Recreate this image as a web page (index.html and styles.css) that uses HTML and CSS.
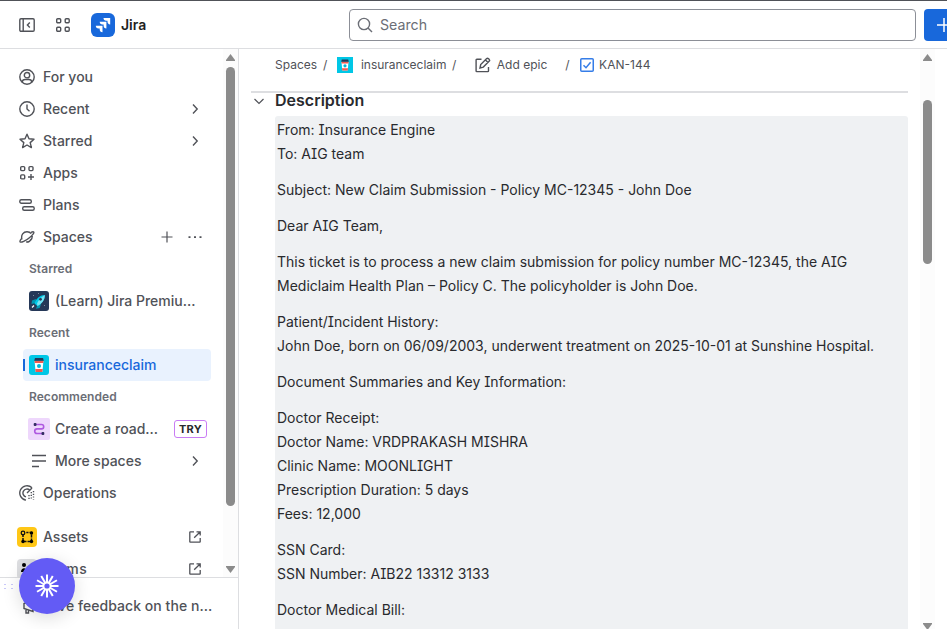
FILE: index.html
```html
<!DOCTYPE html>
<html lang="en">
<head>
<meta charset="utf-8">
<title>KAN-144 - Jira</title>
<link rel="stylesheet" href="styles.css">
</head>
<body>
<svg class="defs" width="0" height="0" aria-hidden="true">
  <symbol id="chev" viewBox="0 0 16 16"><path d="M6 3.5 10.2 8 6 12.5" fill="none" stroke="currentColor" stroke-width="1.4"/></symbol>
  <symbol id="ext" viewBox="0 0 16 16"><path d="M7 2.8H3.3q-.5 0-.5.5v9.4q0 .5.5.5h9.4q.5 0 .5-.5V9M9.5 2.8h3.7v3.7M13 3 7.2 8.8" fill="none" stroke="currentColor" stroke-width="1.3"/></symbol>
  <symbol id="cup" viewBox="0 0 20 20"><path d="M0 0h20v20H0z" fill="#00c7e6"/><path d="M5.6 6h8.8l-1 11H6.6z" fill="#fff"/><path d="M5.5 5.8h9l-.2 2.2H5.7zM6.2 14h7.6l-.4 3H6.6z" fill="#f15b50"/><path d="M6 3h8l.8 2.8H5.2z" fill="#253858"/><circle cx="10" cy="11" r="2" fill="#00b8d9"/></symbol>
</svg>
<div class="app">
  <header class="top">
    <svg class="i16 panel" viewBox="0 0 16 16"><rect x=".8" y="1.7" width="14.4" height="12.6" rx="1.2"/><path d="M4.2 2v12M10.8 5.5 8.4 8l2.4 2.5"/></svg>
    <svg class="i16 grid" viewBox="0 0 16 16"><rect x="1.7" y="1.7" width="4" height="4" rx="1"/><rect x="10.2" y="1.7" width="4" height="4" rx="1"/><rect x="1.7" y="10.2" width="4" height="4" rx="1"/><rect x="10.2" y="10.2" width="4" height="4" rx="1"/></svg>
    <svg class="logo" viewBox="0 0 24 24"><rect width="24" height="24" rx="6" fill="#1868db"/><path d="M12.5 5h6.700v6.600a3 3 0 0 1-2.700-3V7.800h-1.200A2.900 2.900 0 0 1 12.500 5zM8.700 8.800h6.700v6.700a3 3 0 0 1-2.800-3v-.9h-1.100a2.900 2.900 0 0 1-2.800-2.800zM4.800 12.800h6.700v6.500a3 3 0 0 1-2.800-3v-.7H7.600a2.900 2.900 0 0 1-2.800-2.800z" fill="#fff"/></svg>
    <span class="brand">Jira</span>
    <div class="search"><svg class="i16" viewBox="0 0 16 16"><circle cx="7" cy="7" r="5.600"/><path d="m11 11 4 4"/></svg><span>Search</span></div>
    <div class="create"><svg viewBox="0 0 16 16"><path d="M8 1v14M1 8h14"/></svg></div>
  </header>
  <div class="body">
    <aside class="side">
      <div class="scroll">
        <nav>
          <div class="row"><svg class="i16" viewBox="0 0 16 16"><circle cx="8" cy="8" r="7.2"/><circle cx="8" cy="6.2" r="2.7"/><path d="M3.2 13.2c.2-1.900 1.300-2.700 2.800-2.700h4c1.500 0 2.600.8 2.800 2.700"/></svg><span>For you</span></div>
          <div class="row"><svg class="i16" viewBox="0 0 16 16"><circle cx="8" cy="8" r="7.2"/><path d="M8 3.600V8l2.500 2.200"/></svg><span>Recent</span><svg class="i16 end"><use href="#chev"/></svg></div>
          <div class="row"><svg class="i16" viewBox="0 0 16 16"><path d="m8 1.200 2 4.600 5 .5-3.800 3.300 1.200 5L8 12l-4.400 2.600 1.200-5L1 6.300l5-.5z" stroke-linejoin="round"/></svg><span>Starred</span><svg class="i16 end"><use href="#chev"/></svg></div>
          <div class="row"><svg class="i16" viewBox="0 0 16 16"><rect x="1.700" y="1.600" width="4" height="4" rx="1"/><rect x="10" y="1.600" width="4" height="4" rx="1"/><rect x="1.700" y="9.900" width="4" height="4" rx="1"/><path d="M12 9v6M9 12h6"/></svg><span>Apps</span></div>
          <div class="row"><svg class="i16" viewBox="0 0 16 16"><rect x=".8" y="2.700" width="11.500" height="3.500" rx="1.500"/><rect x="3.700" y="9.700" width="11.500" height="3.500" rx="1.500"/></svg><span>Plans</span></div>
          <div class="row"><svg class="i16" viewBox="0 0 16 16"><path d="M3 10.500C1.600 6 4.500 2.800 8 2.800c2 0 3.300.7 4.200 1.900M13.300 7c0 3.800-3 6.200-6.200 5.900M3 9c-1.700 2-2.400 3.300-1.900 3.900 1 1 5.500-1 9.300-4.200 3.300-2.700 5-5 4.300-5.700-.5-.4-1.400-.2-2.700.4M12 10.300c-.8 1.400-2 2.500-3.400 3"/></svg><span>Spaces</span><svg class="i16 plus" viewBox="0 0 16 16"><path d="M8 2.500v11M2.500 8h11"/></svg><svg class="i16 dots" viewBox="0 0 16 16"><path d="M1.500 7.300h2v1.700h-2zM7 7.300h2v1.700H7zM12.500 7.300h2v1.700h-2z"/></svg></div>
          <div class="label">Starred</div>
          <div class="row sub"><svg class="i20" viewBox="0 0 20 20"><rect width="20" height="20" rx="3" fill="#253858"/><path d="m7 8-4 1.500L2.500 13l4-1zM12 13l-1.300 4-3.700.8 1.500-4z" fill="#0097b2"/><path d="M5.500 12.500C7 8 10 4.300 15.800 4c.2 5.500-3.300 9-7.500 11z" fill="#00c7e6"/><path d="M8 12.500c1.500-3.300 4-6.500 7.800-8.500 0 5-3 8.500-7.300 11z" fill="#79e2f2"/><circle cx="11.500" cy="8.300" r="1.400" fill="#253858"/><path d="m5 14.500-2 2" stroke="#fff" stroke-width="1.300"/><path d="M4 4h1v1H4zM15 14h1v1h-1zM9 2h1v1H9z" fill="#7a869a"/></svg><span>(Learn) Jira Premiu...</span></div>
          <div class="label">Recent</div>
          <div class="row sub active"><svg class="i20 round"><use href="#cup"/></svg><span>insuranceclaim</span></div>
          <div class="label">Recommended</div>
          <div class="row sub"><svg class="i22" viewBox="0 0 22 22"><rect width="22" height="22" rx="2" fill="#eed7fc"/><path d="M7 6.500h6.500a2.200 2.200 0 0 1 0 4.400H9a2.300 2.300 0 0 0 0 4.600h5" fill="none" stroke="#af59e0" stroke-width="1.600"/><rect x="5.700" y="5" width="2.800" height="3" rx="1" fill="#352c63"/><rect x="13.500" y="14" width="2.800" height="3" rx="1" fill="#352c63"/></svg><span>Create a road...</span><b class="try">TRY</b></div>
          <div class="row sub"><svg class="i16 more" viewBox="0 0 16 16"><path d="M1 2.500h14M1 8h14M1 13.500h7"/></svg><span>More spaces</span><svg class="i16 end"><use href="#chev"/></svg></div>
          <div class="row"><svg class="i16" viewBox="0 0 16 16"><path d="M13 2.800A7.200 7.200 0 1 0 7 15.100M10.700 5.100a4 4 0 1 0-3.700 6.800M8 8l5-5"/><path d="M14.500 6v8.500M12.300 7v7M10 10v5" stroke-dasharray="1.200 1.500"/></svg><span>Operations</span></div>
          <div class="row product gap"><svg class="i20" viewBox="0 0 20 20"><rect width="20" height="20" rx="4" fill="#ffc716"/><path d="M6 7v7.500h8.500V5.500H9.300" fill="none" stroke="#101214" stroke-width="1.500" stroke-dasharray="3 1"/><circle cx="6" cy="6" r="1.800" fill="none" stroke="#101214" stroke-width="1.300"/><circle cx="14.500" cy="6" r="1.700"/><circle cx="6" cy="14.500" r="1.700"/><circle cx="14.500" cy="14.500" r="1.700"/></svg><span>Assets</span><svg class="i16 end"><use href="#ext"/></svg></div>
          <div class="row product"><svg class="i20" viewBox="0 0 20 20"><rect width="20" height="20" rx="4" fill="#dddee1"/><circle cx="7" cy="6" r="2"/><path d="M4 13c0-5 6-5 6 0z"/></svg><span class="forms">Forms</span><svg class="i16 end"><use href="#ext"/></svg></div>
        </nav>
        <div class="track"><svg viewBox="0 0 9 7"><path d="M4.500 0 9 6v1H0V6z"/></svg><i></i><svg viewBox="0 0 9 7"><path d="M4.500 7 9 1V0H0v1z"/></svg></div>
      </div>
      <div class="feedback"><svg class="i16" viewBox="0 0 16 16"><path d="M4 5.500v5l9 3V2.500zM6 11v4h2.500v-3"/></svg><span>Give feedback on the n...</span></div>
    </aside>
    <main>
      <div class="content">
        <div class="crumbs"><span>Spaces</span><em class="s1">/</em><svg class="cup16"><use href="#cup"/></svg><span>insuranceclaim</span><em class="s2">/</em><svg class="i16 edit" viewBox="0 0 16 16"><path d="M6.500 2.200H1.800q-.7 0-.7.700v11q0 .7.700.7h11q.7 0 .7-.7V10M5 11l.7-3.400 6-6q.8-.7 1.600 0l1 1q.7.8 0 1.500l-6 6zM10.500 3l2.500 2.500"/></svg><span>Add epic</span><em class="s3">/</em><svg class="i14" viewBox="0 0 14 14"><rect x=".75" y=".75" width="12.500" height="12.500" rx="1" fill="#fff"/><path d="m3.500 7.200 2.500 2.500 4.600-5.500"/></svg><span class="key">KAN-144</span></div>
        <div class="desc-head"><svg class="i16" viewBox="0 0 16 16"><path d="m3.500 6 4.500 4.500L12.500 6"/></svg><h2>Description</h2></div>
        <article>
          <p>From: Insurance Engine<br>To: AIG team</p>
          <p>Subject: New Claim Submission - Policy MC-12345 - John Doe</p>
          <p>Dear AIG Team,</p>
          <p>This ticket is to process a new claim submission for policy number MC-12345, the AIG<br>Mediclaim Health Plan – Policy C. The policyholder is John Doe.</p>
          <p>Patient/Incident History:<br>John Doe, born on 06/09/2003, underwent treatment on 2025-10-01 at Sunshine Hospital.</p>
          <p>Document Summaries and Key Information:</p>
          <p>Doctor Receipt:<br>Doctor Name: VRDPRAKASH MISHRA<br>Clinic Name: MOONLIGHT<br>Prescription Duration: 5 days<br>Fees: 12,000</p>
          <p>SSN Card:<br>SSN Number: AIB22 13312 3133</p>
          <p class="last">Doctor Medical Bill:<br>Hospital Name: Sunshine Hospital</p>
        </article>
      </div>
      <div class="track main-track"><svg viewBox="0 0 9 7"><path d="M4.500 0 9 6v1H0V6z"/></svg><i></i><svg viewBox="0 0 9 7"><path d="M4.500 7 9 1V0H0v1z"/></svg></div>
    </main>
  </div>
  <div class="handle"><i></i><i></i></div>
  <div class="fab"><svg viewBox="0 0 24 24"><path d="M15.500 12H23.500M15.030 13.750 21.960 17.750M13.750 15.030 17.750 21.960M12 15.500V23.500M10.250 15.030 6.250 21.960M8.970 13.750 2.040 17.750M8.500 12H.5M8.970 10.250 2.040 6.250M10.250 8.970 6.250 2.040M12 8.500V.5M13.750 8.970 17.750 2.040M15.030 10.250 21.960 6.250"/><circle cx="12" cy="12" r="3.600"/></svg></div>
</div>
</body>
</html>
```
FILE: styles.css
```css
* { box-sizing: border-box; }
body { margin: 0; font-family: Inter, "Liberation Sans", sans-serif; font-size: 14px; color: #292a2e; font-feature-settings: "cv08"; }
svg { display: block; flex: none; }
.defs { position: absolute; }
.app { position: relative; width: 947px; height: 629px; overflow: hidden; display: flex; flex-direction: column; background: #fff; }
.i16 { width: 16px; height: 16px; fill: none; stroke: currentColor; stroke-width: 1.4; }
.i20 { width: 20px; height: 20px; }
.i22 { width: 22px; height: 22px; margin: 0 -1px; }
.round { border-radius: 3px; }

.top { height: 49px; flex: none; display: flex; align-items: center; border-top: 1px solid #505258; border-bottom: 1px solid #dddee1; padding: 1px 0 0 19px; color: #505258; }
.grid { margin: 0 20px; }
.logo { width: 24px; height: 24px; }
.brand { margin-left: 6px; width: 228px; flex: none; line-height: 16px; padding-bottom: 1px; font-weight: 600; color: #1e1f21; }
.search { width: 567px; height: 32px; flex: none; border: 1px solid #8c8f97; border-radius: 4px; display: flex; align-items: center; gap: 7px; padding-left: 7px; color: #6b6e76; }
.search span { line-height: 16px; font-size: 14.200px; }
.create { width: 40px; height: 32px; flex: none; margin-left: 8px; border-radius: 4px; background: #1868db; padding: 8px 12px; }
.create svg { width: 16px; height: 16px; stroke: #fff; stroke-width: 1.5; }

.body { flex: 1; min-height: 0; display: flex; }
.side { width: 239px; flex: none; border-right: 1px solid #dddee1; display: flex; flex-direction: column; }
.scroll { height: 528px; flex: none; overflow: hidden; display: flex; }
nav { width: 223px; flex: none; padding: 12px 12px 0 19px; color: #505258; font-weight: 500; }
.row { height: 32px; display: flex; align-items: center; gap: 8px; padding-right: 5px; white-space: nowrap; }
.row > span { font-size: 14px; line-height: 16px; padding-bottom: 1px; }
.row > .forms { letter-spacing: .5px; }
.end, .plus { margin-left: auto; }
.end { margin-right: 3px; }
.plus { stroke-width: 1.2; }
.plus + .dots { margin: 0 3px 0 4px; }
.dots { fill: currentColor; stroke: none; }
.label { height: 32px; line-height: 32px; padding-left: 10px; font-size: 12px; font-weight: 600; color: #6b6e76; letter-spacing: .05px; }
.sub { margin-left: 4px; padding-left: 6px; gap: 6px; }
.active { position: relative; background: #e9f2fe; color: #1868db; border-radius: 4px; }
.active::before { content: ""; position: absolute; left: 0; top: 10px; width: 2px; height: 12px; background: #1868db; }
.more { margin: 0 2px; }
.try { margin-left: auto; margin-right: -1px; width: 33px; height: 18px; border: 1px solid #c97cf4; border-radius: 3px; font-size: 11px; line-height: 16px; text-align: center; color: #292a2e; letter-spacing: .3px; }
.product { margin-left: -2px; gap: 6px; }
.gap { margin-top: 12px; }
.track { width: 15px; flex: none; background: #fcfcfc; display: flex; flex-direction: column; align-items: center; padding: 5px 0 4px; }
.track svg { width: 9px; height: 7px; fill: #8b8b8b; }
.track i { width: 9px; height: 439px; margin: 6px 0 60px; border-radius: 5px; background: #8b8b8b; }
.feedback { flex: 1; border-top: 1px solid #dddee1; display: flex; align-items: center; gap: 8px; padding: 5px 0 0 20px; color: #505258; font-weight: 500; white-space: nowrap; }
.feedback span { line-height: 16px; padding-bottom: 1px; letter-spacing: .05px; }

main { flex: 1; min-width: 0; display: flex; }
.content { width: 681px; flex: none; padding-left: 12px; }
.crumbs { height: 42px; width: 657px; padding: 0 0 10px 24px; display: flex; align-items: center; font-size: 12px; color: #505258; white-space: nowrap; }
.crumbs span, .crumbs em { font-style: normal; line-height: 16px; padding-bottom: 1px; }
.s1 { margin: 0 10px 0 6px; }
.cup16 { width: 16px; height: 16px; margin-right: 7.500px; }
.s2 { margin: 0 19px 0 5.500px; }
.edit { margin-right: 5.500px; }
.s3 { margin: 0 10.500px 0 18px; }
.i14 { width: 14px; height: 14px; fill: none; stroke: #357de8; stroke-width: 1.5; margin-right: 5px; }
.desc-head { width: 657px; height: 25px; border-top: 2px solid #dddee1; display: flex; align-items: center; gap: 8px; padding-bottom: 8px; color: #505258; }
.desc-head svg { stroke-width: 1.2; }
h2 { margin: 0; font-size: 16px; line-height: 20px; padding-bottom: 1px; font-weight: 600; color: #292a2e; }
article { margin-left: 24px; width: 633px; height: 513px; overflow: hidden; background: #eff1f3; border-radius: 3px 3px 0 0; padding: 2px 0 0 2px; line-height: 24px; white-space: nowrap; }
p { margin: 0 0 12px; }
.last { line-height: 24.600px; }
.main-track svg, .main-track i { flex: none; }
.main-track i { height: 164px; margin: 39px 0 359px; }

.handle { position: absolute; left: 4px; top: 584px; display: flex; gap: 5px; }
.handle i { width: 2px; height: 5px; border-top: 1px solid #c9c8fa; border-bottom: 1px solid #c9c8fa; }
.fab { position: absolute; left: 19px; top: 558px; width: 56px; height: 56px; border-radius: 50%; background: #635bf5; box-shadow: 0 4px 18px rgba(0,0,0,.14); display: flex; align-items: center; justify-content: center; }
.fab svg { width: 24px; height: 24px; fill: none; stroke: #fff; stroke-width: 2; }
```
